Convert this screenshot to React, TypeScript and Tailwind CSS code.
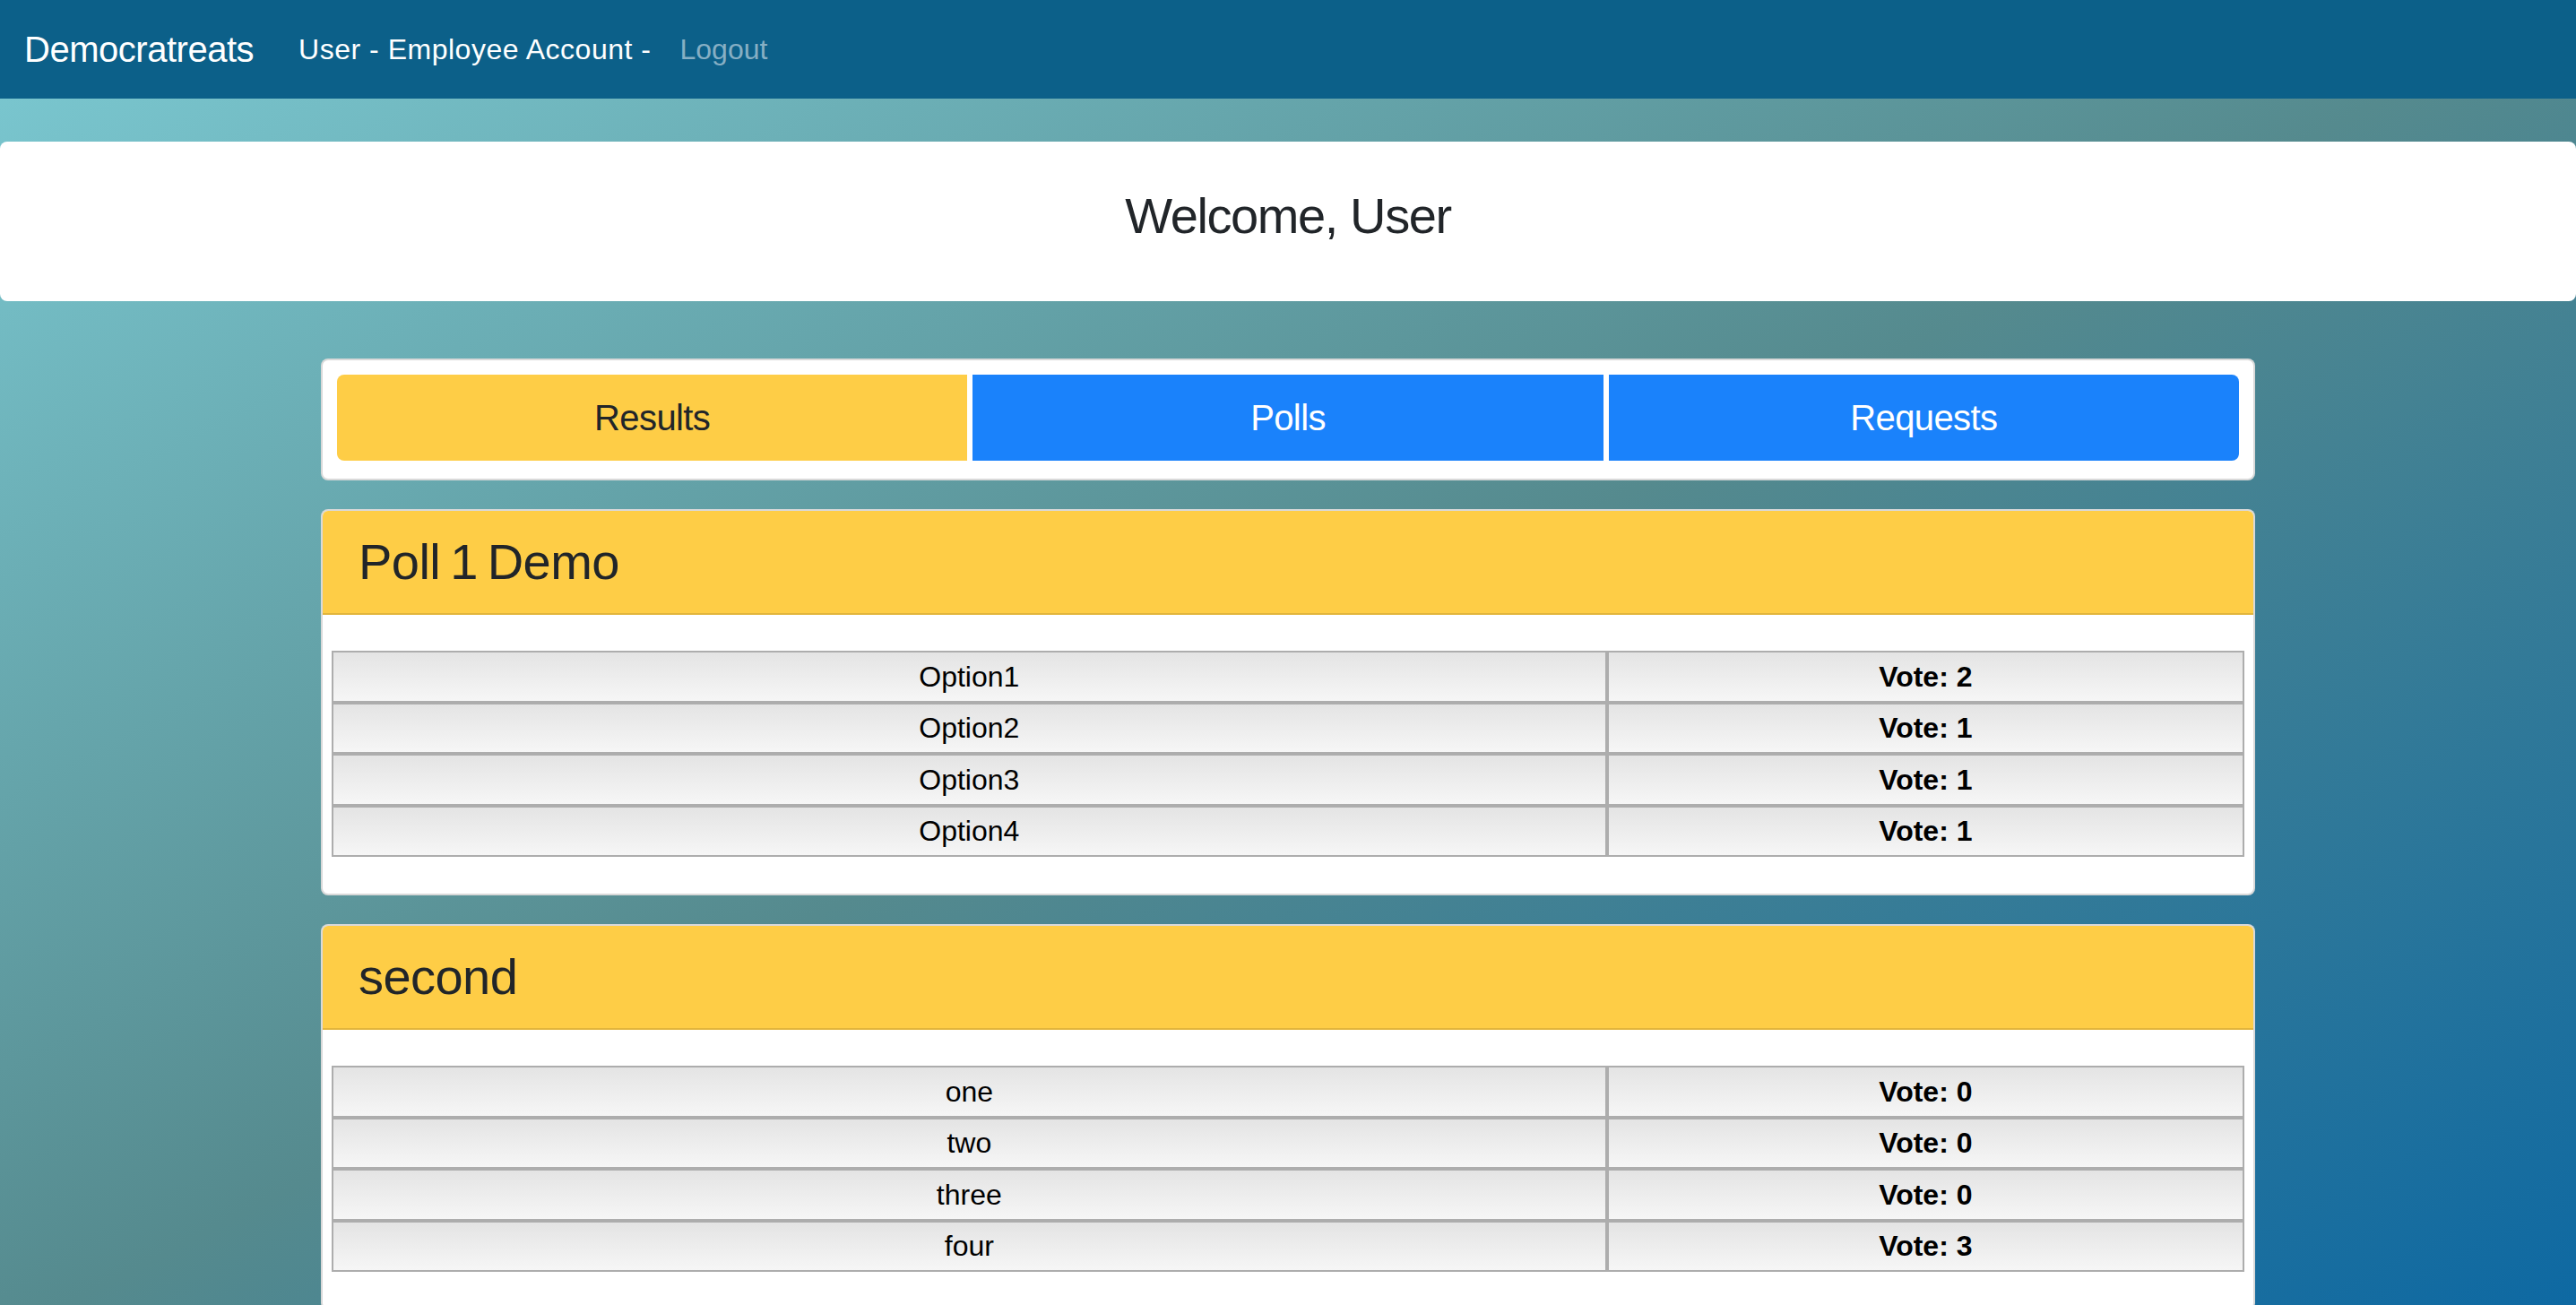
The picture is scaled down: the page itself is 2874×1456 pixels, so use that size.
import React from "react"

type Poll = {
  title: string
  options: { name: string; votes: number }[]
}

const polls: Poll[] = [
  {
    title: "Poll 1 Demo",
    options: [
      { name: "Option1", votes: 2 },
      { name: "Option2", votes: 1 },
      { name: "Option3", votes: 1 },
      { name: "Option4", votes: 1 },
    ],
  },
  {
    title: "second",
    options: [
      { name: "one", votes: 0 },
      { name: "two", votes: 0 },
      { name: "three", votes: 0 },
      { name: "four", votes: 3 },
    ],
  },
]

function Navbar() {
  return (
    <nav className="h-[110px] bg-[#0c6089] flex items-center pl-[27px] pr-8">
      <span className="text-[40px] text-white mr-8 tracking-[-0.012em]">Democratreats</span>
      <span className="pl-[18px] pr-4 text-[32px] text-white tracking-[0.016em]">User - Employee Account -</span>
      <a href="#" className="px-4 text-[32px] text-[#86afc4]">
        Logout
      </a>
    </nav>
  )
}

function Tabs() {
  return (
    <div className="bg-white border-2 border-black/15 rounded-lg px-4 pt-4 pb-5">
      <div className="grid grid-cols-3 gap-[6px]">
        <button className="h-24 rounded-l-lg bg-[#fecd46] text-[#212529] text-[40px] tracking-[-0.015em]">
          Results
        </button>
        <button className="h-24 bg-[#1a82fb] text-white text-[40px] tracking-[-0.015em]">Polls</button>
        <button className="h-24 rounded-r-lg bg-[#1a82fb] text-white text-[40px] tracking-[-0.015em]">
          Requests
        </button>
      </div>
    </div>
  )
}

function PollCard({ poll }: { poll: Poll }) {
  return (
    <div className="bg-white border-2 border-black/15 rounded-lg overflow-hidden">
      <div className="h-[116px] bg-[#fecd46] border-b-2 border-[#e2b53c] flex items-center px-10">
        <h3 className="text-[56px] text-[#212529] tracking-[-0.01em] [word-spacing:-4px]">{poll.title}</h3>
      </div>
      <div className="px-2.5 pt-10 pb-[41px]">
        <div className="grid grid-cols-[2fr_1fr] text-[32px] text-black">
          {poll.options.map((o) => (
            <React.Fragment key={o.name}>
              <div className="h-[57.5px] border-2 border-[#adadad] bg-linear-to-b from-[#e4e4e4] to-[#f6f6f6] flex items-center justify-center">
                {o.name}
              </div>
              <div className="h-[57.5px] border-2 border-[#adadad] bg-linear-to-b from-[#e4e4e4] to-[#f6f6f6] flex items-center justify-center font-bold">
                Vote: {o.votes}
              </div>
            </React.Fragment>
          ))}
        </div>
      </div>
    </div>
  )
}

export default function App() {
  return (
    <div
      className="min-h-screen w-full bg-[linear-gradient(to_bottom_right,#7ccad3,#558a8e_50%,#0c68a3)] pb-8"
      style={{ fontFamily: '"Liberation Sans", Arial, sans-serif' }}
    >
      <Navbar />
      <div className="mt-12 h-[178px] bg-white rounded-lg flex items-center justify-center pb-3">
        <h3 className="text-[56px] text-[#212529] tracking-[-0.025em]">Welcome, User</h3>
      </div>
      <div className="w-[2158px] mx-auto mt-16 flex flex-col gap-8">
        <Tabs />
        {polls.map((p) => (
          <PollCard key={p.title} poll={p} />
        ))}
      </div>
    </div>
  )
}
